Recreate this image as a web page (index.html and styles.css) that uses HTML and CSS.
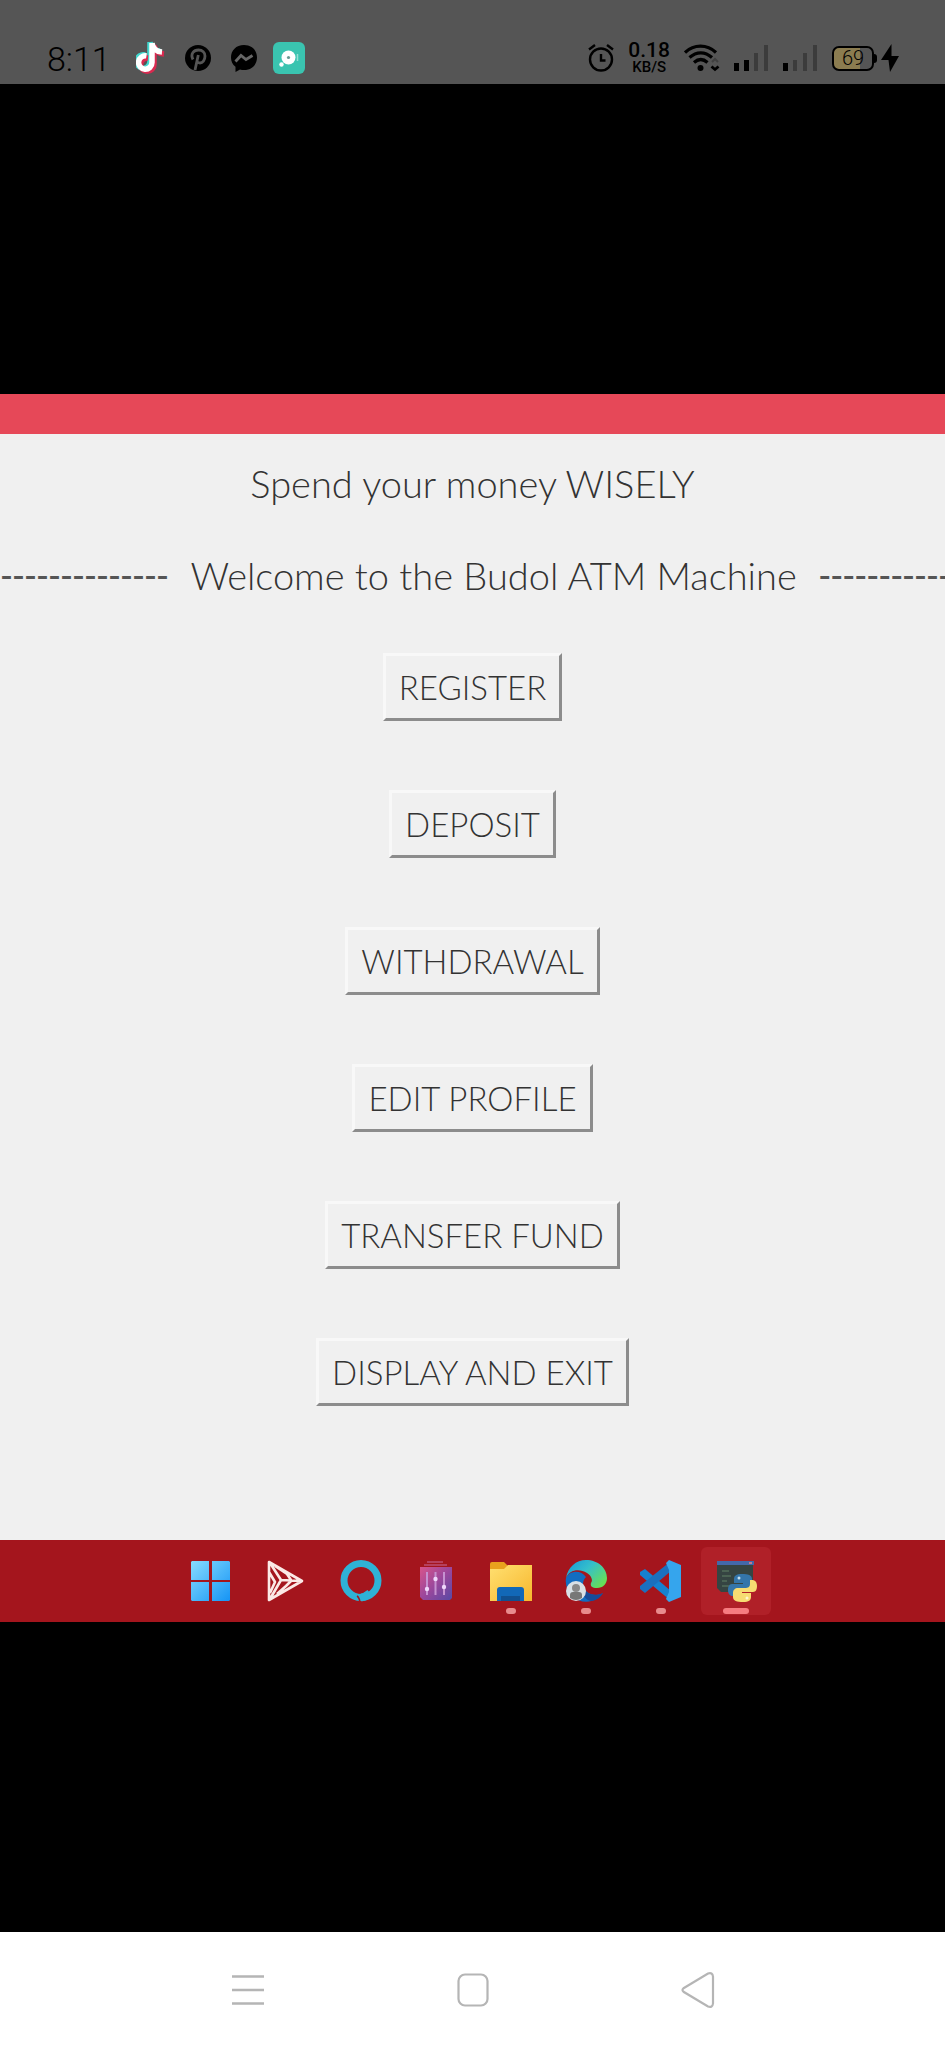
FILE: index.html
```html
<!DOCTYPE html>
<html lang="en">
<head>
<meta charset="utf-8">
<meta name="viewport" content="width=device-width, initial-scale=1">
<title>Budol ATM Machine</title>
<link rel="stylesheet" href="styles.css">
</head>
<body class="phone">
<header class="status">
  <div class="status-left">
    <time class="clock">8:11</time>
    <svg class="ic-note" width="30" height="34" viewBox="0 0 30 34" aria-hidden="true">
      <g fill="none" stroke-width="5.5">
        <path d="M15 2v19.500a6.700 6.700 0 1 1-5-6.500M15 2c.5 5 4 8.500 10 9" stroke="#42d8cf" transform="translate(-1 -1)"/>
        <path d="M17 3v19.500a6.700 6.700 0 1 1-6-6.500M17 3c.5 5 4 8.500 10 9" stroke="#d92a50" transform="translate(1 1)"/>
        <path d="M16 2v19.500a6.700 6.700 0 1 1-5.500-6.600M16 2c.5 5 4 8.500 10 9" stroke="#fff"/>
      </g>
    </svg>
    <svg class="ic-pin" width="26" height="26" viewBox="0 0 26 26" aria-hidden="true">
      <circle cx="13" cy="13" r="13" fill="#000"/>
      <path d="M8 14.500c-3-6 1-9.500 5.500-9.500 4 0 6.500 2.500 6.500 6 0 4.500-2.500 7-5 7-1.500 0-2.500-.7-3-1.500M13.300 10 10 25" fill="none" stroke="#555" stroke-width="2.800"/>
    </svg>
    <svg class="ic-chat" width="28" height="27" viewBox="0 0 28 27" aria-hidden="true">
      <path d="M14 0C6 0 1 5.500 1 12.500c0 4 1.500 7 4.500 9.300V27l4.500-2.500c1.300.4 2.600.5 4 .5 8 0 13-5.500 13-12.500S22 0 14 0z" fill="#000"/>
      <path d="m5.500 16.500 5.500-6 5 4 6.500-4" fill="none" stroke="#666" stroke-width="2.800"/>
    </svg>
    <svg class="ic-app" width="32" height="32" viewBox="0 0 32 32" aria-hidden="true">
      <rect width="32" height="32" rx="6" fill="#3ac4b0"/>
      <circle cx="15.500" cy="15.500" r="7" fill="#fff"/><circle cx="8.500" cy="22.500" r="2.200" fill="#fff"/>
      <circle cx="15.500" cy="15.500" r="1.600" fill="#6b9993"/><path d="M24.500 12v7" stroke="#95dfd4" stroke-width="1.500"/>
    </svg>
  </div>
  <div class="status-right">
    <svg width="26" height="28" viewBox="0 0 26 28" fill="none" stroke="#000" stroke-width="2.400" aria-hidden="true">
      <circle cx="13" cy="15.500" r="11"/><path d="M13 10v6.500h4.500M1 5.500 7 1M25 5.500 19 1"/>
    </svg>
    <div class="speed"><span class="speed-value">0.18</span><span class="speed-unit">KB/S</span></div>
    <svg class="ic-wifi" width="36" height="28" viewBox="0 0 36 28" aria-hidden="true">
      <g fill="none" stroke="#000" stroke-width="3.200"><path d="M1 8.500c9-8.500 22-8.500 31 0M5.500 13.500c7-6.300 15.500-6.300 22.500 0M10 18.500c4.500-4 9-4 13.500 0"/></g>
      <circle cx="16.500" cy="24" r="3" fill="#000"/>
      <path d="m28 18 3-3 3 3" fill="none" stroke="#404040" stroke-width="2"/><path d="m27.500 22.500 3.500 3 3.500-3" fill="none" stroke="#000" stroke-width="2.800"/>
    </svg>
    <svg class="ic-bars" width="35" height="28" viewBox="0 0 35 28" aria-hidden="true">
      <path d="M0 19h5v8H0zM10 16h5v11h-5z" fill="#000"/><path d="M20 9h4v18h-4zM30 1h4v26h-4z" fill="#3c3c3c"/>
    </svg>
    <svg class="ic-bars" width="35" height="28" viewBox="0 0 35 28" aria-hidden="true">
      <path d="M0 19h5v8H0z" fill="#000"/><path d="M10 16h4v11h-4zM20 9h4v18h-4zM30 1h4v26h-4z" fill="#3c3c3c"/>
    </svg>
    <div class="power">
      <span class="battery">69</span>
      <svg width="18" height="28" viewBox="0 0 18 28" aria-hidden="true"><path d="M10.500 0 0 16h7.500L9 28l9-16h-7.500z" fill="#000"/></svg>
    </div>
  </div>
</header>

<main class="viewer">
  <section class="desktop">
    <div class="titlebar"></div>
    <div class="atm">
      <p class="slogan">Spend your money WISELY</p>
      <div class="welcome">
        <span class="dashes dashes-left" aria-hidden="true">---------------</span>
        <h1 class="heading">Welcome to the Budol ATM Machine</h1>
        <span class="dashes" aria-hidden="true">-----------</span>
      </div>
      <div class="menu">
        <button class="key" type="button">REGISTER</button>
        <button class="key" type="button">DEPOSIT</button>
        <button class="key" type="button">WITHDRAWAL</button>
        <button class="key" type="button">EDIT PROFILE</button>
        <button class="key" type="button">TRANSFER FUND</button>
        <button class="key" type="button">DISPLAY AND EXIT</button>
      </div>
    </div>
    <nav class="taskbar" aria-label="Taskbar">
      <button class="task" type="button" aria-label="Start">
        <svg width="42" height="42" viewBox="0 0 42 42">
          <defs><linearGradient id="win" x2="1" y2="1"><stop stop-color="#87dcff"/><stop offset="1" stop-color="#1594f5"/></linearGradient></defs>
          <path d="M2 1h17v19H1V2zM22 1h17l1 1v18H22zM1 22h18v19H2l-1-1zM22 22h18v18l-1 1H22z" fill="url(#win)"/>
        </svg>
      </button>
      <button class="task" type="button" aria-label="Media player">
        <svg width="42" height="42" viewBox="0 0 42 42" fill="none" stroke="#fbe9e6" stroke-width="2.600" stroke-linejoin="round">
          <path d="M4 2 37 21 4 40zM5 3l11 17 20 1M16 20 5 39M4 12l6 10-5 11M10 6l12 8 4 6M26 21l-5 5-9 8"/>
        </svg>
      </button>
      <button class="task" type="button" aria-label="Assistant">
        <svg width="42" height="42" viewBox="0 0 42 42" fill="none" stroke="#2fb2d6">
          <circle cx="21" cy="20.500" r="17" stroke-width="7"/>
          <path d="M30 33q-5 4-9 4.500" stroke-width="8"/>
          <path d="M17 36q2 1 3 6" stroke="#a4151d" stroke-width="1.500"/>
        </svg>
      </button>
      <button class="task" type="button" aria-label="Recycle bin">
        <svg width="42" height="42" viewBox="0 0 42 42">
          <defs><linearGradient id="bin" x2="1" y2="1"><stop stop-color="#d8548b"/><stop offset=".5" stop-color="#9b479c"/><stop offset="1" stop-color="#5749a4"/></linearGradient></defs>
          <path d="M12 2h16M9 5h23" stroke="#b6405e" stroke-width="2"/>
          <path d="M5 7h32v31l-2 2H8l-3-3z" fill="url(#bin)"/>
          <path d="M12 12v23M20.500 12v23M29 12v23" stroke="#c591d0" stroke-width="2"/>
          <g fill="#efd7fa"><circle cx="12" cy="29" r="2.200"/><circle cx="20.500" cy="19" r="2.200"/><circle cx="29" cy="27" r="2.200"/></g>
        </svg>
      </button>
      <button class="task task-open" type="button" aria-label="File Explorer">
        <svg width="42" height="42" viewBox="0 0 42 42">
          <defs><linearGradient id="dir" x2="1" y2="1"><stop stop-color="#ffe071"/><stop offset="1" stop-color="#f7b72d"/></linearGradient></defs>
          <path d="M0 4q0-2 2-2h12l4 4v6H0z" fill="#e9a11d"/><path d="M0 9h14l4-4h24v36H0z" fill="url(#dir)"/>
          <path d="M7 41V30q0-3 3-3h21q3 0 3 3v11z" fill="#1268b7"/><path d="M11 36h19v5H11z" fill="#11508f"/>
        </svg>
      </button>
      <button class="task task-open" type="button" aria-label="Edge">
        <svg width="42" height="42" viewBox="0 0 42 42">
          <defs><linearGradient id="sea" x2="1" y2=".7"><stop stop-color="#1696d8"/><stop offset=".5" stop-color="#35c0cb"/><stop offset="1" stop-color="#67df58"/></linearGradient></defs>
          <path d="M1 18a20.500 20.500 0 0 0 37 15c-8 5-20 0-20-9 0-3 1-5 3-7C16 10 5 10 1 18z" fill="#126dc1"/>
          <path d="M38 33c-8 4-18 1-20-7-3 8 3 15 9 15 5-1 9-4 11-8z" fill="#174c9a"/>
          <path d="M1 18C3 7 11 0 21 0c12 0 21 8 21 18 0 6-4 10-10 10-5 0-7-2-6-5 2-2 1-7-4-10C14 8 4 10 1 18z" fill="url(#sea)"/>
          <circle cx="11" cy="31" r="10" fill="#d9e0e5"/><circle cx="11" cy="28" r="4" fill="#898989"/><path d="M5 38v-3q0-3 3-3h6q3 0 3 3v3q-6 4-12 0z" fill="#777"/>
        </svg>
      </button>
      <button class="task task-open" type="button" aria-label="Visual Studio Code">
        <svg width="42" height="42" viewBox="0 0 42 42">
          <path d="m0 12 5-3 26 22v10L0 15z" fill="#1681d0"/><path d="m0 29 5 4 26-22V1L0 26z" fill="#1b70bf"/>
          <path d="m29 0 12 5v32l-12 5-3-3 3-7V10l-3-7z" fill="#35a5ed"/>
        </svg>
      </button>
      <button class="task task-open task-active" type="button" aria-label="Python">
        <svg width="42" height="42" viewBox="0 0 42 42">
          <path d="M2 2h36v30H6l-4-4z" fill="#354442"/><path d="M2 1h37v4H2z" fill="#4368aa"/><path d="M34 2h3v2h-3z" fill="#c4788f"/>
          <path d="M7 11h7M7 16h9M7 21h5M7 26h7" stroke="#526c59" stroke-width="1.500"/>
          <path d="M27 14c-6 0-8 2-8 5v4h9v1H17c-3 0-4 3-4 6 0 4 2 6 5 6h3v-4c0-3 2-4 5-4h7c3 0 4-2 4-4v-5c0-4-4-5-10-5z" fill="#3475aa"/>
          <path d="M28 42c6 0 8-2 8-5v-4h-9v-1h11c3 0 4-3 4-6 0-4-2-6-5-6h-2v4c0 3-2 4-5 4h-7c-3 0-5 2-5 5v4c0 4 4 5 10 5z" fill="#f7dc72"/>
          <circle cx="24" cy="18" r="1.500" fill="#c7e0ef"/><circle cx="32" cy="38" r="1.500" fill="#fff6cf"/>
        </svg>
      </button>
    </nav>
  </section>
</main>

<nav class="navkeys" aria-label="System navigation">
  <button class="navkey" type="button" aria-label="Recent apps">
    <svg width="36" height="36" viewBox="0 0 36 36" fill="none" stroke="#b5b5b5" stroke-width="2.500"><path d="M2 4.500h32M2 18h32M2 31.500h32"/></svg>
  </button>
  <button class="navkey" type="button" aria-label="Home">
    <svg width="36" height="36" viewBox="0 0 36 36" fill="none" stroke="#b5b5b5" stroke-width="2.200"><rect x="3.500" y="2.500" width="29" height="31" rx="6.500"/></svg>
  </button>
  <button class="navkey" type="button" aria-label="Back">
    <svg width="36" height="36" viewBox="0 0 36 36" fill="none" stroke="#b5b5b5" stroke-width="2.200"><path d="M3.500 16.200 28 1.500q4.500-1.500 5 3v27q-.5 4.500-5 3L3.500 19.800q-2-1.800 0-3.600z"/></svg>
  </button>
</nav>
</body>
</html>
```
FILE: styles.css
```css
* { box-sizing: border-box; }
svg { display: block; flex: none; }
button { font: inherit; color: inherit; margin: 0; padding: 0; border: 0; background: none; }

.phone {
  margin: 0;
  min-height: 100vh;
  display: flex;
  flex-direction: column;
  background: #000;
  font-family: Roboto, "Liberation Sans", sans-serif;
}

.status {
  height: 84px;
  padding: 30px 46px 0 47px;
  display: flex;
  justify-content: space-between;
  background: #555;
  color: #000;
}
.status-left, .status-right { display: flex; align-items: center; height: 56px; }
.clock { padding-top: 3px; font-size: 34px; line-height: 53px; font-weight: 300; }
.status-left { gap: 19px; }
.ic-note { margin-left: 6px; }
.ic-app { margin-left: -4px; }
.status-right { gap: 14px; }
.speed { display: flex; flex-direction: column; align-items: center; font-weight: 500; }
.speed-value { font-size: 21px; line-height: 18px; }
.speed-unit { font-size: 15px; line-height: 16px; }
.power { display: flex; align-items: center; gap: 4px; }
.battery {
  position: relative;
  width: 42px;
  height: 25px;
  margin-right: 3px;
  border: 2px solid #000;
  border-radius: 7px;
  background: linear-gradient(90deg, #8b7c50 68%, #555 68%);
  font-size: 20px;
  font-weight: 300;
  line-height: 21px;
  text-align: center;
}
.battery::after {
  content: "";
  position: absolute;
  right: -5px;
  top: 6px;
  width: 3px;
  height: 9px;
  border-radius: 0 3px 3px 0;
  background: #000;
}

.viewer { flex: 1; display: flex; flex-direction: column; justify-content: center; }
.titlebar { height: 40px; background: #e64858; }
.atm {
  padding: 23px 0 134px;
  background: #f0f0f0;
  color: #333;
  font-family: Lato, "Open Sans", sans-serif;
  font-size: 38px;
  font-weight: 300;
  line-height: 52px;
}
.slogan { margin: 0 0 40px; text-align: center; }
.welcome { display: flex; gap: 22px; overflow: hidden; }
.heading { margin: 0; flex: none; font-size: 38px; font-weight: 300; }
.dashes {
  flex: 3;
  min-width: 0;
  display: flex;
  overflow: hidden;
  white-space: nowrap;
  color: #555;
  font-family: "Liberation Sans", sans-serif;
  font-size: 36px;
}
.dashes-left { flex: 4; justify-content: flex-end; }
.menu { display: flex; flex-direction: column; align-items: center; gap: 69px; padding-top: 52px; }
.key {
  height: 68px;
  padding: 0 13px;
  border: 3px solid;
  border-color: #f8f8f8 #8c8c8c #8c8c8c #f8f8f8;
  font-size: 33px;
}

.taskbar {
  height: 82px;
  padding-left: 2px;
  display: flex;
  align-items: center;
  justify-content: center;
  gap: 5px;
  background: #a4151d;
}
.task {
  position: relative;
  width: 70px;
  height: 68px;
  display: flex;
  align-items: center;
  justify-content: center;
  border-radius: 6px;
}
.task-active { background: #b02028; }
.task-open::after {
  content: "";
  position: absolute;
  left: 50%;
  bottom: 1px;
  width: 10px;
  height: 6px;
  margin-left: -5px;
  border-radius: 3px;
  background: #e88b8d;
}
.task-active::after { width: 26px; margin-left: -13px; background: #f67c80; }

.navkeys {
  height: 116px;
  display: flex;
  align-items: center;
  justify-content: center;
  gap: 165px;
  background: #fff;
}
.navkey { width: 60px; height: 60px; display: flex; align-items: center; justify-content: center; }
```
